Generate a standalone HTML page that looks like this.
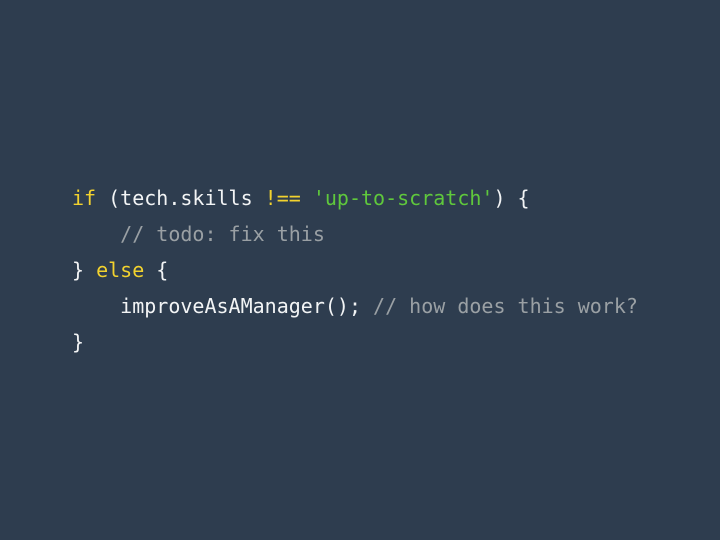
<!DOCTYPE html>
<html><head><meta charset="utf-8"><style>
html,body{margin:0;padding:0;}
body{width:720px;height:540px;background:#2e3d4f;overflow:hidden;}
pre{position:absolute;left:72px;top:180px;margin:0;font-family:"DejaVu Sans Mono","Liberation Mono",monospace;font-size:20px;line-height:36px;color:#f2f4f5;}
.k{color:#f2d22e}.s{color:#5fc83c}.c{color:#9aa0a4}
</style></head><body>
<pre><span class="k">if</span> (tech.skills <span class="k">!==</span> <span class="s">'up-to-scratch'</span>) {
    <span class="c">// todo: fix this</span>
} <span class="k">else</span> {
    improveAsAManager(); <span class="c">// how does this work?</span>
}</pre>
</body></html>
